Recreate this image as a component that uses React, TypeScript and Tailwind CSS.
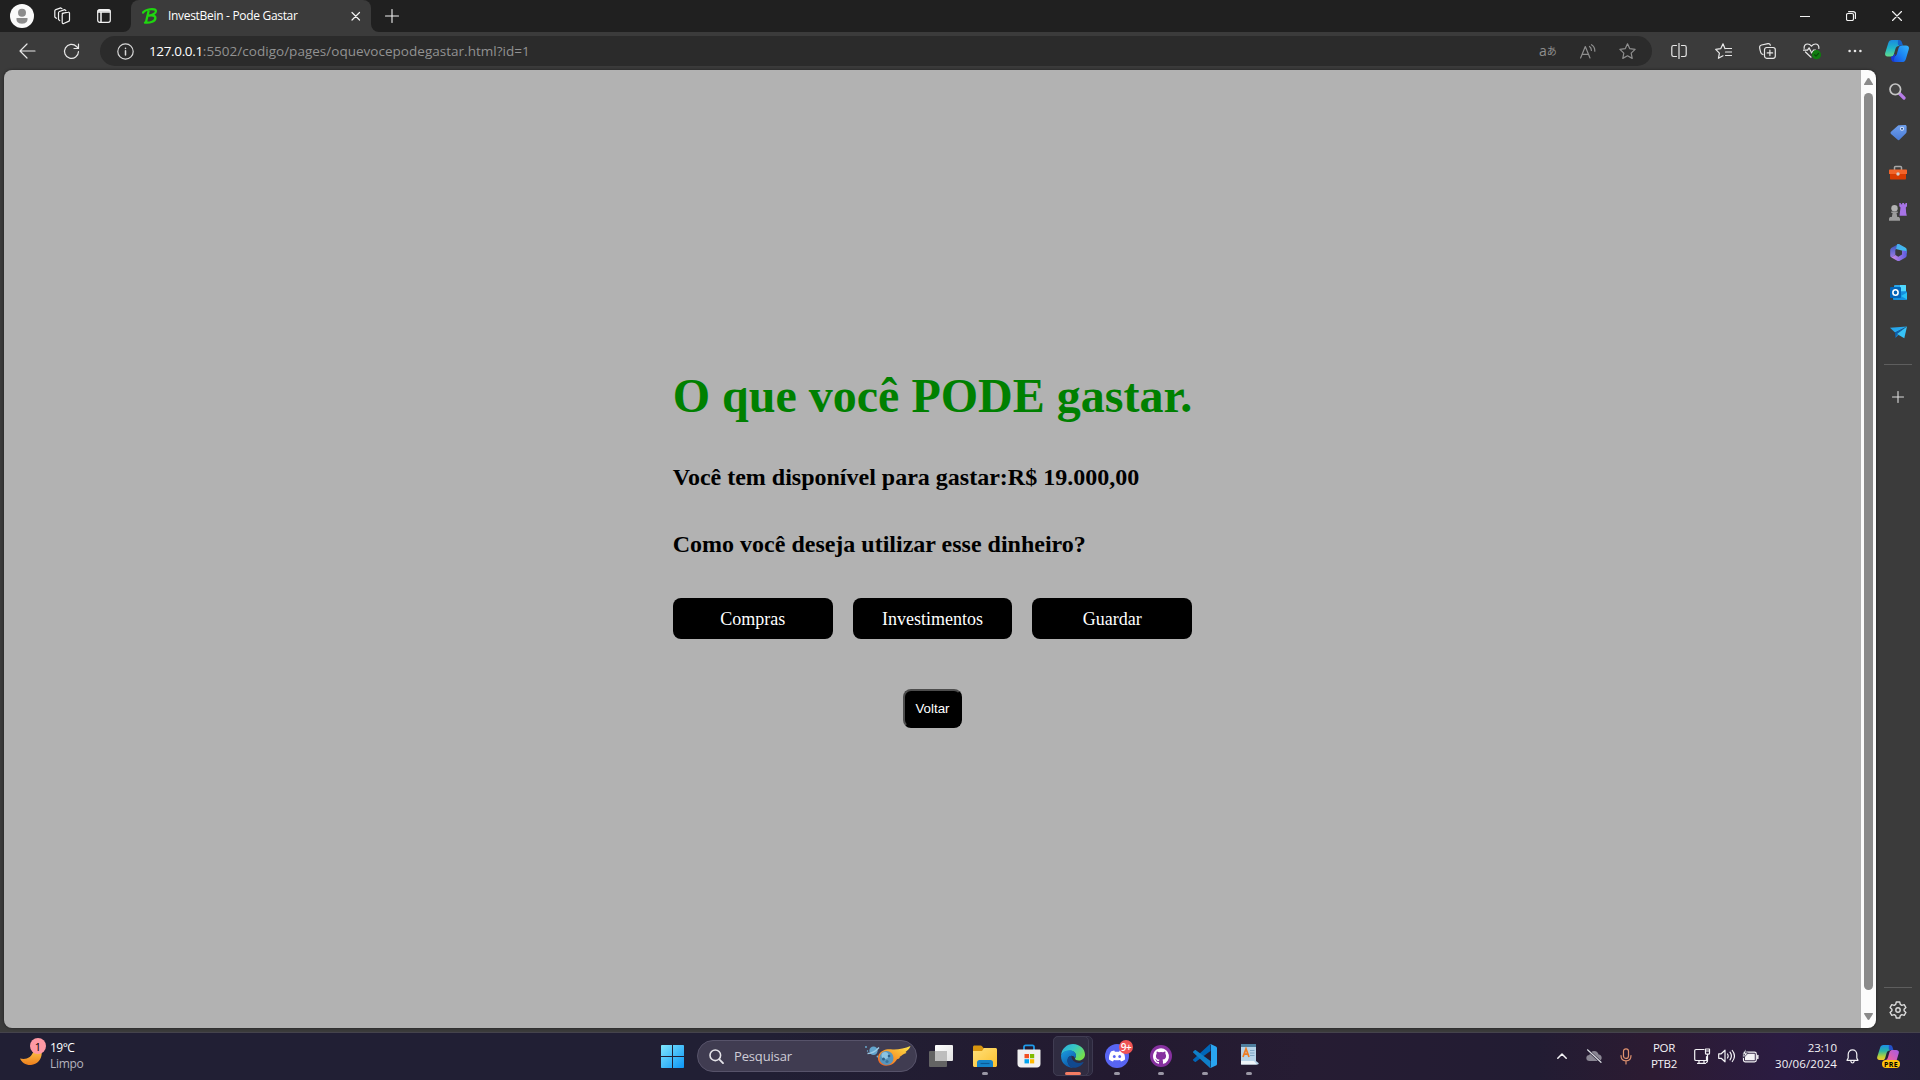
import React from "react";

type IconProps = { w: number; h: number; className?: string; children: React.ReactNode };

function Icon({ w, h, className = "", children }: IconProps) {
  return (
    <svg
      width={w}
      height={h}
      viewBox={`0 0 ${w} ${h}`}
      fill="none"
      stroke="currentColor"
      strokeWidth={1.2}
      strokeLinecap="round"
      strokeLinejoin="round"
      className={`block shrink-0 ${className}`}
    >
      {children}
    </svg>
  );
}

function TabBar() {
  return (
    <header className="flex h-8 items-center bg-[#202020] text-[#f2f2f2]">
      <Icon w={24} h={24} className="ml-2.5">
        <circle cx="12" cy="12" r="12" fill="#fafafa" stroke="none" />
        <circle cx="12" cy="8.700" r="4" fill="#8c8c8c" stroke="none" />
        <path d="M6.500 14h11v1.500c0 2.400-2.400 4.200-5.500 4.200s-5.500-1.800-5.500-4.200z" fill="#8c8c8c" stroke="none" />
      </Icon>
      <Icon w={18} h={18} className="ml-[19px]">
        <path d="M9.200 6.300 15.300 5.200a1 1 0 0 1 1.200.9v7a1.500 1.500 0 0 1-1 1.300l-4.800 2.100a1 1 0 0 1-1.500-.9V7.800a1.500 1.500 0 0 1 1-1.300z" />
        <path d="M6.800 13.600 5.500 12.500V5.800a1.500 1.500 0 0 1 1-1.300L11.700 2.600l1.100.9" />
        <path d="M3.300 11.300 1.800 10V3.900a1.500 1.500 0 0 1 1-1.300L7.800.9l1.200.8" />
      </Icon>
      <Icon w={14} h={14} className="ml-[26px]">
        <rect x=".7" y=".7" width="12.600" height="12.600" rx="2" />
        <path d="M1 3h12M4 3v10" strokeWidth="1.500" />
        <path d="M1.500 1.600h11" strokeWidth="1.800" />
      </Icon>
      <div className="relative ml-5 flex h-8 w-60 items-center rounded-t-lg bg-[#3b3b3b]">
        <svg className="absolute bottom-0 -left-2" width="8" height="8" viewBox="0 0 8 8">
          <path d="M8 0v8H0a8 8 0 0 0 8-8z" fill="#3b3b3b" />
        </svg>
        <svg className="absolute -right-2 bottom-0" width="8" height="8" viewBox="0 0 8 8">
          <path d="M0 0v8h8a8 8 0 0 1-8-8z" fill="#3b3b3b" />
        </svg>
        <Icon w={16} h={16} className="ml-[11px] text-[#1fd60f]">
          <path
            d="M1 4.500C3 2 8 .8 12 1.300c2.500.4 2.600 3-.2 4.700-1.600 1-3.500 1.500-5 1.600 3-.5 6.700-.3 6.600 2.500-.1 3.200-5 5-10.400 4.500M6.500 3.500 4 14"
            strokeWidth="2.300"
          />
        </Icon>
        <span className="ml-2.5 w-[171px] text-xs leading-4 tracking-[-0.31px] whitespace-nowrap text-white">
          InvestBein - Pode Gastar
        </span>
        <Icon w={10} h={10} className="ml-[11.5px]">
          <path d="m1 1.500 7.500 7.500M8.500 1.500 1 9" />
        </Icon>
      </div>
      <Icon w={14} h={14} className="ml-[14px]">
        <path d="M7 .5v13M.5 7h13" strokeWidth="1.100" />
      </Icon>
      <div className="mr-[18px] ml-auto flex items-center">
        <Icon w={10} h={10}>
          <path d="M0 5.500h10" />
        </Icon>
        <Icon w={10} h={10} className="ml-9">
          <rect x=".5" y="2.500" width="7" height="7" rx="1.500" />
          <path d="M2.600.6h4.600a2.300 2.300 0 0 1 2.300 2.300v4.500" />
        </Icon>
        <Icon w={10} h={10} className="ml-9">
          <path d="m.5.5 9 9M9.500.5l-9 9" />
        </Icon>
      </div>
    </header>
  );
}

function Copilot() {
  return (
    <svg width="24" height="22" viewBox="0 0 24 22" className="block">
      <defs>
        <linearGradient id="cpA" x1="0" y1="0" x2="0" y2="1">
          <stop offset="0" stopColor="#1a8be0" />
          <stop offset=".5" stopColor="#1fb5c9" />
          <stop offset="1" stopColor="#62dc8c" />
        </linearGradient>
        <linearGradient id="cpB" x1="0" y1="1" x2="1" y2="0">
          <stop offset="0" stopColor="#1746e0" />
          <stop offset=".5" stopColor="#1b86f2" />
          <stop offset="1" stopColor="#35b4fb" />
        </linearGradient>
      </defs>
      <path d="M13 0c1.500 0 2.500 1 2 2.500L14 6c-2 .3-3 1-3.600 3l-1.600 5.500C8.300 16 7.500 16.500 6 16.500H2.500C.5 16.500-.3 15 .2 13L3.300 3C3.900 1 5 0 7 0z" fill="url(#cpA)" />
      <path d="M13 0h1c1.600 0 2.400.8 2.800 2l1.200 3.500h-4c-.8-.3-1.300-1-1.200-2z" fill="#1763c9" />
      <path d="M17.500 5.500H21c2.300 0 3.400 1.500 2.800 3.700l-3 10C20.200 21.200 19 22 17 22h-7c-1.300 0-2.200-1.200-1.800-2.500L9 16.500c1.700-.3 2.500-1.200 3-3L13.600 8c.6-1.800 1.800-2.500 3.900-2.500z" fill="url(#cpB)" />
      <path d="M6 16.500c1.500 0 2.400-.6 3-2l1.500-.5-1.600 5.500c-.3 1-.1 1.900.6 2.500-1.700 0-2.700-.8-3.100-2.200z" fill="#1739d8" />
    </svg>
  );
}

function Toolbar() {
  return (
    <div className="flex h-[38px] items-center bg-[#3b3b3b] text-[#e8e8e8]">
      <Icon w={17} h={16} className="ml-[19px]">
        <path d="M16 8H1.200M8 1 1 8l7 7" />
      </Icon>
      <Icon w={17} h={17} className="ml-[27px]">
        <path d="M15.500 8.500a7 7 0 1 1-2-5l1.800 1.700M15.500 1v4.500H11" />
      </Icon>
      <div className="ml-5 flex h-[30px] w-[1552px] items-center rounded-full bg-[#2b2b2b]">
        <Icon w={17} h={17} className="ml-[17px] text-[#d8d8d8]">
          <circle cx="8.500" cy="8.500" r="7.700" />
          <path d="M8.500 7.800v4.200M8.500 5.200v.2" strokeWidth="1.500" />
        </Icon>
        <div className="ml-[15px] flex text-[13.5px] leading-5 whitespace-nowrap text-[#929292]">
          <span className="tracking-[-0.35px] text-white">127.0.0.1</span>
          <span className="tracking-[0.02px]">:5502/codigo/pages/oquevocepodegastar.html?id=1</span>
        </div>
        <div className="mr-[16px] ml-auto flex items-center text-[#8f8f8f]">
          <span className="flex w-[18px] items-center text-[#8f8f8f]">
            <span className="text-[14px] leading-4">a</span>
            <span className="text-[10px] leading-4">あ</span>
          </span>
          <Icon w={16} h={15} className="ml-[23px]">
            <path d="m.6 14 4.700-11.500L10 14M2.200 10.300h6.200M9.500 2.500c1.300.9 1.900 2.200 1.900 4M11.500.7c2.200 1.300 3.400 3.500 3.300 6.500" />
          </Icon>
          <Icon w={17} h={16} className="ml-[23px]">
            <path d="m8.500.8 2.300 4.900 5.300.7-3.900 3.700 1 5.300-4.700-2.600-4.700 2.600 1-5.300L.9 6.400l5.300-.7z" />
          </Icon>
        </div>
      </div>
      <Icon w={16} h={16} className="ml-[19px]">
        <path d="M8 0v16M5.500 2.500h-3a1.700 1.700 0 0 0-1.700 1.700v7.600a1.700 1.700 0 0 0 1.700 1.700h3M10.500 2.500h3a1.700 1.700 0 0 1 1.700 1.700v7.600a1.700 1.700 0 0 1-1.700 1.700h-3" />
      </Icon>
      <Icon w={17} h={16} className="ml-7">
        <path d="M10 5.700 8 .8 5.700 5.700l-5 .7 3.700 3.700-1 5.200L8 12.800M10.500 5.500h6M10.500 9h6M10.500 12.500h6" />
      </Icon>
      <Icon w={17} h={16} className="ml-[27px]">
        <rect x="5.500" y="4.500" width="10.800" height="10.800" rx="2.200" />
        <path d="M10.900 7.200v5.400M8.200 9.900h5.400M4 11.500 2.500 10.700C1.500 10 .5 5 .7 3.700.9 2.700 1.800 2.200 2.500 2L9 .7c1.200-.2 2 .3 2.400 1.500" />
      </Icon>
      <svg width="19" height="17" viewBox="0 0 19 17" className="ml-[27px] block shrink-0" fill="none" stroke="#e8e8e8" strokeWidth="1.200" strokeLinecap="round" strokeLinejoin="round">
        <path d="M1.200 5.500C.8 2.500 2.500 1 4.500 1c1.800 0 3 .9 4 2.200C9.500 1.900 10.700 1 12.500 1c2 0 3.700 1.500 3.300 4.500M2.500 9l5.500 5.200M.5 7.200h4l1.600-2.400L8.700 10l1.800-3h2" />
        <circle cx="13.500" cy="11.700" r="4.600" fill="#107c10" stroke="none" />
        <path d="m11.600 11.800 1.400 1.300 2.500-2.600" stroke="#0a4a0a" />
      </svg>
      <Icon w={14} h={4} className="ml-[26px]">
        <g fill="currentColor" stroke="none">
          <circle cx="1.600" cy="2" r="1.300" />
          <circle cx="7" cy="2" r="1.300" />
          <circle cx="12.400" cy="2" r="1.300" />
        </g>
      </Icon>
      <div className="ml-[23px]">
        <Copilot />
      </div>
    </div>
  );
}

function ChoiceButton({ label }: { label: string }) {
  return (
    <button className="h-[41px] flex-1 rounded-lg bg-black pt-px text-[18px] leading-[21px] text-white">{label}</button>
  );
}

function WebPage() {
  return (
    <main className="flex flex-1 flex-col items-center bg-[#b2b2b2] pt-[298px] font-['Liberation_Serif',serif] text-black">
      <div className="w-[519.5px]">
        <h1 className="text-[48px] leading-[55px] font-bold whitespace-nowrap text-[#008000]">O que você PODE gastar.</h1>
        <h2 className="mt-[41px] text-2xl leading-[27px] font-bold whitespace-nowrap">
          Você tem disponível para gastar:R$ 19.000,00
        </h2>
        <h2 className="mt-10 text-2xl leading-[27px] font-bold whitespace-nowrap">
          Como você deseja utilizar esse dinheiro?
        </h2>
        <div className="mt-10 flex gap-5">
          <ChoiceButton label="Compras" />
          <ChoiceButton label="Investimentos" />
          <ChoiceButton label="Guardar" />
        </div>
      </div>
      <button className="mt-[50px] h-[39px] w-[59px] rounded-lg border-2 border-t-[#4d4d4d] border-r-black border-b-black border-l-[#4d4d4d] bg-black font-['Liberation_Sans',sans-serif] text-[13.333px] leading-[15px] text-white">
        Voltar
      </button>
    </main>
  );
}

function Scrollbar() {
  return (
    <div className="flex w-[15px] flex-col items-center bg-[#fcfcfc]">
      <svg width="9" height="7" viewBox="0 0 9 7" className="mt-2 block">
        <path d="M4.500 0c.4 0 .7.200.9.500l3.500 5.600c.2.500 0 .9-.5.900H.6c-.5 0-.7-.4-.5-.9L3.600.5c.2-.3.5-.5.900-.5z" fill="#8b8b8b" />
      </svg>
      <div className="mt-2 h-[897px] w-[9px] rounded-full bg-[#8b8b8b]" />
      <svg width="9" height="7" viewBox="0 0 9 7" className="mt-[23px] block">
        <path d="M4.500 7c.4 0 .7-.2.900-.5L8.900.9C9.100.4 8.900 0 8.400 0H.6C.1 0-.1.400.1.900l3.500 5.600c.2.300.5.500.9.500z" fill="#8b8b8b" />
      </svg>
    </div>
  );
}

function Slot({ children }: { children: React.ReactNode }) {
  return <div className="flex h-10 w-full items-center justify-center">{children}</div>;
}

function EdgeSidebar() {
  return (
    <aside className="flex w-11 flex-col items-center pt-0.5 text-[#dcdcdc]">
      <Slot>
        <svg width="17" height="17" viewBox="0 0 17 17" fill="none" className="mr-px mb-0.5">
          <path d="m10.500 10.500 4.500 4.500" stroke="#b57be8" strokeWidth="3.200" strokeLinecap="round" />
          <circle cx="6.300" cy="6.300" r="5.300" stroke="#c4c4c4" strokeWidth="1.700" fill="#444" />
        </svg>
      </Slot>
      <Slot>
        <svg width="17" height="17" viewBox="0 0 17 17">
          <defs>
            <linearGradient id="tagG" x1="0" y1="0" x2="0" y2="1">
              <stop offset="0" stopColor="#6fa0ee" />
              <stop offset="1" stopColor="#4a7bd6" />
            </linearGradient>
          </defs>
          <path d="M9.500 1.200 15 1c1 0 1.600.6 1.600 1.500v5.300c0 .6-.2 1-.6 1.500l-6.300 6.300c-.7.700-1.600.7-2.300 0L1 9.900c-.6-.7-.6-1.500 0-2.200l6.800-6c.5-.4 1-.5 1.700-.5z" fill="url(#tagG)" />
          <circle cx="12" cy="4.700" r="2" fill="#dbe8fb" />
          <circle cx="12" cy="4.700" r="1" fill="#234a8c" />
        </svg>
      </Slot>
      <Slot>
        <svg width="18" height="15" viewBox="0 0 18 15">
          <path d="M5.500 5V2.500c0-.6.400-1 1-1h5c.6 0 1 .4 1 1V5" fill="none" stroke="#a8a8a8" strokeWidth="1.500" />
          <path d="M0 5.500c0-.6.400-1 1-1h16c.6 0 1 .4 1 1V9H0z" fill="#f2642a" />
          <path d="M1 9h16v4.500c0 .6-.4 1-1 1H2c-.6 0-1-.4-1-1z" fill="#d83b01" />
          <circle cx="9" cy="9" r="1.700" fill="#d0d0d0" />
        </svg>
      </Slot>
      <Slot>
        <svg width="18" height="18" viewBox="0 0 18 18">
          <path d="M10.300 0h1.500v1.300h1.400V0h1.900v1.300h1.300V0H18v3.200l-1.200 1.300.3 5 .7 3.200h-7.300l1-8.200-1.200-1.300z" fill="#a774e6" />
          <circle cx="5.500" cy="5.200" r="3.200" fill="#b2b2b2" />
          <path d="M2.300 8.500h6.400v1.500H7.500l.8 4H10c.6.500 1 1.200 1 2v1.800H0V16c0-.8.400-1.500 1-2h1.800l.8-4H2.300z" fill="#9b9b9b" />
        </svg>
      </Slot>
      <Slot>
        <svg width="17" height="17" viewBox="0 0 17 17">
          <defs>
            <linearGradient id="mA" x1="0" y1="0" x2="0" y2="1">
              <stop offset="0" stopColor="#3455b8" />
              <stop offset="1" stopColor="#9a7be6" />
            </linearGradient>
            <linearGradient id="mB" x1="0" y1="0" x2="1" y2="1">
              <stop offset="0" stopColor="#4aa8ec" />
              <stop offset="1" stopColor="#3bc5f2" />
            </linearGradient>
            <linearGradient id="mC" x1="0" y1="0" x2="1" y2="0">
              <stop offset="0" stopColor="#d08be8" />
              <stop offset="1" stopColor="#5a5ce0" />
            </linearGradient>
          </defs>
          <path d="M8.500 0 2 3.500C.9 4.200.2 5.100.2 6.300v5.200c0 1 .6 1.600 1.300 1.900L5.300 11V6.300z" fill="url(#mA)" />
          <path d="M7 .6C7.800 0 9 0 9.800.4l5.400 3c1 .6 1.500 1.500 1.500 2.600v3.500l-5-3L6 5z" fill="url(#mB)" />
          <path d="M16.700 7v4.200c0 1.200-.6 2-1.500 2.600l-5.400 2.900c-.9.500-1.700.4-2.600 0L1.500 13.400 5.300 11l3 1.700 3.700-2.200v-4z" fill="url(#mC)" />
        </svg>
      </Slot>
      <Slot>
        <svg width="17" height="17" viewBox="0 0 17 17">
          <rect x="4" y="1" width="12" height="9" rx="1" fill="#2aa7ea" />
          <path d="M10 1h5c.6 0 1 .4 1 1v5h-6z" fill="#50d9ff" />
          <path d="M3 8.500 17 7.500V15c0 .6-.4 1-1 1H4c-.6 0-1-.4-1-1z" fill="#1490df" />
          <path d="m17 8.500-6 3.500 6 3.500z" fill="#28c0f5" />
          <rect x="0" y="3" width="11" height="11" rx="1" fill="#0364b8" />
          <ellipse cx="5.500" cy="8.500" rx="2.600" ry="2.700" fill="none" stroke="#fff" strokeWidth="1.600" />
        </svg>
      </Slot>
      <Slot>
        <svg width="17" height="13" viewBox="0 0 17 13">
          <path d="M0 1.800 17 .5 5 6.500z" fill="#27a7ec" />
          <path d="M5 6.500 17 .5 7 8l-1.700 4z" fill="#0b5fae" />
          <path d="m7 8 10-7.500-2.700 11.800z" fill="#37c3f7" />
          <path d="M7 8 5.300 12l3.200-3z" fill="#1484d6" />
        </svg>
      </Slot>
      <div className="mt-3 h-px w-7 bg-[#5e5e5e]" />
      <Icon w={12} h={12} className="mt-[26px] mr-px">
        <path d="M6 .5v11M.5 6h11" strokeWidth="1.100" />
      </Icon>
      <div className="mt-auto h-px w-7 bg-[#5e5e5e]" />
      <Icon w={18} h={18} className="mt-[13px] mb-[13px]">
        <path d="M7.300 1h3.400l.6 2.400 1.500.9 2.400-.7 1.700 2.900-1.800 1.700v1.600l1.800 1.700-1.700 2.900-2.400-.7-1.500.9-.6 2.400H7.300l-.6-2.400-1.500-.9-2.400.7-1.700-2.900 1.800-1.700V8.200L1.100 6.500l1.700-2.900 2.400.7 1.500-.9z" strokeWidth="1.400" />
        <circle cx="9" cy="9" r="2.200" strokeWidth="1.400" />
      </Icon>
    </aside>
  );
}

function Comet() {
  return (
    <svg width="46" height="20" viewBox="0 0 46 20" className="block">
      <defs>
        <linearGradient id="cometG" x1="0" y1="1" x2="1" y2="0">
          <stop offset="0" stopColor="#ee5a24" />
          <stop offset=".5" stopColor="#f9a02c" />
          <stop offset="1" stopColor="#ffe94a" />
        </linearGradient>
      </defs>
      <circle cx="8.500" cy="4.800" r="4.200" fill="#62a3cc" />
      <path d="M2.500 7.500C6 7.500 11 5 14 1.500" stroke="#9ccbe6" strokeWidth="1.300" fill="none" />
      <g fill="#6db3da">
        <circle cx="1" cy="1" r=".9" />
        <circle cx="2.500" cy="5" r=".7" />
        <circle cx="12.500" cy="10.500" r=".9" />
      </g>
      <path d="M13.500 9C16 4 22 2.500 27.500 3.500 33 3.800 40 2.500 45.500 0c-1 3-3 4.500-5 6l1 1c-3 1-5 2.500-7 4 1 .7 0 1.500-2.500 2.300C30 17 26 19.800 21 19.800c-6 0-9.500-5.500-7.500-10.800z" fill="url(#cometG)" />
      <circle cx="21.500" cy="12" r="7" fill="#5795bd" />
      <circle cx="20" cy="9.500" r="3.500" fill="#8cc4e2" />
      <circle cx="18.500" cy="13" r="1.500" fill="#2f6289" />
      <circle cx="24" cy="10" r="1.300" fill="#2f6289" />
      <circle cx="22" cy="15.500" r="1.600" fill="#3b739b" />
    </svg>
  );
}

function Dot() {
  return <div className="absolute bottom-px left-1/2 h-[3px] w-1.5 -translate-x-1/2 rounded-full bg-[#9a97a5]" />;
}

function AppSlot({ children, running = true }: { children: React.ReactNode; running?: boolean }) {
  return (
    <div className="relative flex h-10 w-11 items-center justify-center">
      {children}
      {running && <Dot />}
    </div>
  );
}

function TaskbarApps() {
  return (
    <div className="flex items-center">
      <svg width="23" height="23" viewBox="0 0 23 23" className="mt-px block">
        <defs>
          <linearGradient id="winG" x1="0" y1="0" x2="1" y2="1">
            <stop offset="0" stopColor="#7fe6fd" />
            <stop offset="1" stopColor="#0c95f5" />
          </linearGradient>
        </defs>
        <path d="M1 0h10v11H0V1c0-.6.400-1 1-1zM12 0h10c.6 0 1 .4 1 1v10H12zM0 12h11v11H1c-.6 0-1-.4-1-1zM12 12h11v10c0 .6-.4 1-1 1H12z" fill="url(#winG)" />
      </svg>
      <div className="ml-[13px] flex h-8 w-[220px] items-center rounded-full border border-[#57536a] bg-[#403c51]">
        <Icon w={15} h={15} className="ml-[11px] text-[#e4e3e8]">
          <circle cx="6.300" cy="6.300" r="5.300" strokeWidth="1.600" />
          <path d="m10.300 10.300 3.700 3.900" strokeWidth="1.800" />
        </Icon>
        <span className="ml-[10px] text-[13px] leading-5 tracking-[-0.15px] text-[#cfcdd6]">Pesquisar</span>
        <div className="mr-[5px] ml-auto">
          <Comet />
        </div>
      </div>
      <svg width="24" height="22" viewBox="0 0 24 22" className="ml-3 block">
        <defs>
          <linearGradient id="tvG" x1="0" y1="0" x2="1" y2="1">
            <stop offset="0" stopColor="#ffffff" />
            <stop offset="1" stopColor="#e2e2e2" />
          </linearGradient>
        </defs>
        <rect x="0" y="6" width="18" height="16" rx="1" fill="#636363" />
        <rect x="6" y="0" width="18" height="16" rx="1" fill="url(#tvG)" />
        <path d="M6 6h12v10H7c-.6 0-1-.4-1-1z" fill="#bdbdbd" />
      </svg>
      <div className="ml-[10px] flex">
        <AppSlot>
          <svg width="24" height="23" viewBox="0 0 24 23">
            <defs>
              <linearGradient id="fxG" x1="0" y1="0" x2="1" y2="1">
                <stop offset="0" stopColor="#ffe07a" />
                <stop offset="1" stopColor="#fbc02d" />
              </linearGradient>
            </defs>
            <path d="M0 2c0-.8.600-1.500 1.500-1.500h6c.7 0 1.200.3 1.600.8L10.500 3H22v4H0z" fill="#d9960f" />
            <path d="M0 6h9l2-3h11.500c.9 0 1.500.7 1.500 1.500v16c0 .9-.7 1.500-1.500 1.500h-21C.7 22 0 21.400 0 20.500z" fill="url(#fxG)" />
            <path d="M4 22v-4.500C4 16 5 15 6.500 15h11c1.500 0 2.500 1 2.500 2.500V22z" fill="#1583c9" />
            <path d="M7.500 18.500h9" stroke="#0c5a96" strokeWidth="1.200" />
          </svg>
        </AppSlot>
        <AppSlot running={false}>
          <svg width="24" height="24" viewBox="0 0 24 24">
            <path d="M7 6V3c0-1 .6-1.600 1.600-1.600h6.800c1 0 1.600.6 1.600 1.600v3" fill="none" stroke="#1f9ae8" strokeWidth="1.800" />
            <path d="M.5 6.500c0-.6.400-1 1-1h21c.6 0 1 .4 1 1V20c0 2-1.500 3.500-3.500 3.500H4C2 23.500.5 22 .5 20z" fill="#f0f0f0" />
            <path d="M7.500 10H12v4.200H7.500z" fill="#f25022" />
            <path d="M13 10h4.200v4.200H13z" fill="#7fba00" />
            <path d="M7.500 15.200H12v4.200H7.500z" fill="#00a4ef" />
            <path d="M13 15.200h4.200v4.200H13z" fill="#ffb900" />
          </svg>
        </AppSlot>
        <div className="relative ml-0.5 h-10 w-[42px]">
          <div className="absolute inset-y-0 left-0 w-10 rounded-[5px] border border-[#3d3950] bg-[#2c283d]" />
          <div className="absolute inset-y-0 left-0 w-9 rounded-[5px] border border-[#403c52] bg-[#302c41]" />
          <svg width="24" height="24" viewBox="0 0 24 24" className="absolute top-2 left-2">
            <defs>
              <linearGradient id="edA" x1="0" y1="0" x2="1" y2=".6">
                <stop offset="0" stopColor="#2aa8dd" />
                <stop offset=".5" stopColor="#36c8c5" />
                <stop offset="1" stopColor="#74e04c" />
              </linearGradient>
              <linearGradient id="edB" x1="0" y1="0" x2=".6" y2="1">
                <stop offset="0" stopColor="#1b9de2" />
                <stop offset="1" stopColor="#0c56a6" />
              </linearGradient>
            </defs>
            <path d="M.1 11C.7 4.700 5.800 0 12 0c7 0 12 5.200 12 10.500 0 3.500-2.800 6-6 6-2.500 0-4-1-4-2 0-.7 1-1.200 1-3 0-2.600-2.500-4.800-6-4.800-4 0-7.200 1.500-8.900 4.300z" fill="url(#edA)" />
            <path d="M.1 11C1.500 8 5 6.200 8.500 6.200c3.700 0 6.500 2.300 6.500 5.300 0 1.500-.7 2-1 2.800-.5-1.700-2-2.500-3.500-2.500-2.500 0-4 2.200-4 4.700 0 4 3 7 7.500 7.400C5.500 24.500-.6 18.500.1 11z" fill="url(#edB)" />
            <path d="M10.500 11.800c-2.500 0-4 2.200-4 4.700 0 4 3.500 7.500 8 7.200 3.500-.5 6.300-2.500 8-5.200.2-.4-.1-.7-.5-.5-5 2.300-11.800.2-11.500-6.200z" fill="#11498f" />
          </svg>
          <div className="absolute bottom-px left-3 h-[3px] w-4 rounded-full bg-[#f47c63]" />
        </div>
        <AppSlot>
          <svg width="24" height="24" viewBox="0 0 24 24">
            <circle cx="12" cy="12" r="12" fill="#5865f2" />
            <path d="M9.300 6.500c-1.500.2-2.800.7-3.500 1.200C4.500 9.800 3.800 12.300 4 15.500c1.300 1 2.700 1.600 4 1.900l.9-1.500c2 .6 4.200.6 6.200 0l.9 1.500c1.400-.3 2.800-.9 4-1.900.2-3.200-.5-5.700-1.800-7.800-.7-.5-2-1-3.500-1.200l-.6 1.200h-4.200z" fill="#fff" />
            <ellipse cx="9.300" cy="12.500" rx="1.400" ry="1.600" fill="#5865f2" />
            <ellipse cx="14.700" cy="12.500" rx="1.400" ry="1.600" fill="#5865f2" />
          </svg>
          <div className="absolute top-[3.5px] left-[24px] flex h-3.5 w-3.5 items-center justify-center rounded-full bg-[#f05454] text-[10px] leading-none font-semibold tracking-[-0.5px] text-white">
            9+
          </div>
        </AppSlot>
        <AppSlot>
          <svg width="22" height="22" viewBox="0 0 22 22">
            <circle cx="11" cy="11" r="11" fill="#86319f" />
            <g transform="translate(3 3) scale(.667)">
              <path fill="#fff" d="M12 .3C5.400.3 0 5.700 0 12.300c0 5.300 3.400 9.800 8.200 11.400.6.100.8-.3.8-.6v-2.200c-3.300.7-4-1.400-4-1.400-.6-1.400-1.400-1.800-1.400-1.800-1-.7.100-.7.1-.7 1.200.1 1.900 1.200 1.900 1.200 1 1.800 2.800 1.300 3.500 1 .1-.8.4-1.300.8-1.600-2.700-.3-5.500-1.300-5.500-5.900 0-1.300.5-2.400 1.200-3.200-.1-.3-.5-1.500.1-3.200 0 0 1-.3 3.300 1.200a11.500 11.500 0 0 1 6 0c2.300-1.500 3.300-1.200 3.300-1.200.7 1.700.2 2.900.1 3.200.8.8 1.200 1.900 1.200 3.200 0 4.600-2.800 5.600-5.500 5.900.4.400.8 1.100.8 2.200v3.300c0 .3.200.7.8.6A12 12 0 0 0 12 .3z" />
            </g>
          </svg>
        </AppSlot>
        <AppSlot>
          <svg width="24" height="24" viewBox="0 0 24 24">
            <path d="m0 16.300 1.700 1.500c.4.3.9.3 1.200 0L17.500 7V.2c-.4 0-.7.1-1 .4L.1 15.400c-.2.300-.2.600-.1.900z" fill="#0066b8" />
            <path d="m0 7.700 1.700-1.500c.4-.3.900-.3 1.200 0L17.500 17v6.800c-.4 0-.7-.1-1-.4L.1 8.600C-.1 8.300-.1 8 0 7.700z" fill="#0f7fc8" />
            <path d="M17.500 23.800c-.6 0-1-.2-1.300-.5.900.8 1.800.3 1.800-.7V1.400c0-1.100-1-1.600-1.800-.8.400-.5 1.100-.7 1.900-.4L23 2.600c.6.300 1 .9 1 1.500v15.800c0 .7-.4 1.200-1 1.500l-4.900 2.300z" fill="#29a5f0" />
          </svg>
        </AppSlot>
        <AppSlot>
          <svg width="19" height="22" viewBox="0 0 19 22" className="mb-1">
            <path d="M1 1h15v17l2.500 2c.5.700 0 1.500-.8 1.500H2c-.8 0-1.300-.6-1-1.500z" fill="#b7d3e8" />
            <path d="M1 1h15v3H1z" fill="#4f7f9f" />
            <path d="M1 18h13l3 3.500H1z" fill="#eef4f9" />
            <path d="m3 14 3-8.200L9 14M4.200 11.200h3.600" stroke="#ee7b22" strokeWidth="1.700" fill="none" />
            <path d="M10 7.500h4.500M10 10h4.500M10 12.500h4.500" stroke="#7fa6c4" />
          </svg>
        </AppSlot>
      </div>
    </div>
  );
}

function TaskbarCopilot() {
  return (
    <div className="relative h-[22px] w-6">
      <svg width="22" height="20" viewBox="0 0 24 22" className="block">
        <defs>
          <linearGradient id="tcA" x1="0" y1="0" x2="0" y2="1">
            <stop offset="0" stopColor="#1d8fe8" />
            <stop offset=".4" stopColor="#28b5a5" />
            <stop offset=".75" stopColor="#b2cf3c" />
            <stop offset="1" stopColor="#f5c62c" />
          </linearGradient>
          <linearGradient id="tcB" x1="1" y1="0" x2="0" y2="1">
            <stop offset="0" stopColor="#a35be6" />
            <stop offset=".6" stopColor="#e45fa8" />
            <stop offset="1" stopColor="#f78a5a" />
          </linearGradient>
        </defs>
        <path d="M13 0c1.500 0 2.500 1 2 2.500L14 6c-2 .3-3 1-3.600 3l-1.600 5.500C8.300 16 7.500 16.500 6 16.500H2.500C.5 16.500-.3 15 .2 13L3.300 3C3.900 1 5 0 7 0z" fill="url(#tcA)" />
        <path d="M13 0h1c1.600 0 2.400.8 2.800 2l1.200 3.500h-4c-.8-.3-1.300-1-1.200-2z" fill="#2450c8" />
        <path d="M17.500 5.500H21c2.300 0 3.400 1.500 2.800 3.700l-3 10C20.200 21.200 19 22 17 22h-7c-1.300 0-2.200-1.200-1.800-2.500L9 16.500c1.700-.3 2.500-1.200 3-3L13.600 8c.6-1.800 1.800-2.500 3.900-2.500z" fill="url(#tcB)" />
      </svg>
      <div className="absolute top-[15px] left-[5px] flex h-[8px] w-[18px] items-center justify-center rounded-sm bg-[#ffc20e] text-[7px] leading-none font-bold tracking-[0.3px] text-black">
        PRE
      </div>
    </div>
  );
}

function Tray() {
  return (
    <div className="flex items-center leading-4 text-[#f4f3f6]">
      <Icon w={10} h={6}>
        <path d="m.8 5.200 4.200-4.200 4.200 4.200" strokeWidth="1.500" />
      </Icon>
      <Icon w={16} h={14} className="ml-[19px]">
        <path d="M3.500 12C1.500 12 .3 10.700.3 9s1.300-3 3-3C4 3.700 5.700 2 8.200 2c2.300 0 4 1.500 4.400 3.600 1.800 0 3.100 1.500 3.100 3.200S14.500 12 12.500 12z" fill="#8a8693" stroke="none" />
        <path d="m1.500.8 13.500 12.500" stroke="#211b32" strokeWidth="2.400" />
        <path d="m1.500.8 13.500 12.500" stroke="#dddce2" />
      </Icon>
      <Icon w={12} h={17} className="ml-[18px] text-[#e0926f]">
        <rect x="3.500" y=".8" width="5" height="9.600" rx="2.500" />
        <path d="M1 7.500c0 3.200 2 5.300 5 5.300s5-2.100 5-5.300M6 13v3" />
      </Icon>
      <div className="ml-[17px] flex w-[30px] flex-col items-center text-[11.5px] leading-4">
        <span className="tracking-[-0.3px]">POR</span>
        <span className="tracking-[-0.3px]">PTB2</span>
      </div>
      <Icon w={17} h={16} className="ml-[15px]">
        <path d="M10 1.500H2A1.300 1.300 0 0 0 .7 2.800v8.400A1.300 1.300 0 0 0 2 12.500h10.500V8.500M5 12.500V15M10 12.500V15M3.500 15.300h8" />
        <path d="M11.500 1h4v4.200a1 1 0 0 1-1 1h-2a1 1 0 0 1-1-1zM13.500 6.500v6a2 2 0 0 1-1 2" />
        <path d="M12 3h3" />
      </Icon>
      <Icon w={17} h={14} className="ml-[7px]">
        <path d="M.7 4.800h2.500L7 1.200v11.600L3.200 9.300H.7zM9.500 5c.8 1.200.8 2.800 0 4M12 3.200c1.700 2.300 1.700 5.300 0 7.600M14.300 1.500c2.600 3.300 2.600 7.700 0 11" />
      </Icon>
      <Icon w={17} h={14} className="ml-[7px]">
        <rect x="1.500" y="3.200" width="12.800" height="9.600" rx="1.800" />
        <rect x="3" y="4.700" width="9.800" height="6.600" fill="currentColor" stroke="none" />
        <path d="M15.800 6.500v3" strokeWidth="1.500" />
        <path d="M4 0 .2 5h2.200L1.400 9l4.800-5H4z" fill="currentColor" stroke="#211b38" strokeWidth=".7" />
      </Icon>
      <div className="ml-3.5 flex w-[64px] flex-col items-end text-[11.5px] leading-4">
        <span>23:10</span>
        <span className="tracking-[0.1px]">30/06/2024</span>
      </div>
      <Icon w={13} h={15} className="ml-[9px]">
        <path d="M1 11.300 2.200 9V5.300C2.200 2.700 4.100.8 6.500.8s4.300 1.900 4.300 4.500V9l1.200 2.300zM4.800 12c.2 1.300.8 2 1.700 2s1.500-.7 1.700-2" />
      </Icon>
      <div className="ml-[18px]">
        <TaskbarCopilot />
      </div>
    </div>
  );
}

function Taskbar() {
  return (
    <footer className="grid h-12 grid-cols-[661px_1fr_363px] items-center border-t border-[#45434c] bg-[linear-gradient(90deg,#211f34_0%,#211f34_40%,#231a30_58%,#261c33_68%,#221c33_80%,#2c1b32_86%,#2b1c42_93%,#231f38_100%)] pb-px">
      <div className="flex items-center">
        <div className="relative mb-2 ml-5 h-7 w-[27px]">
          <svg width="22" height="16" viewBox="0 0 22 16" className="absolute bottom-0 left-0">
            <defs>
              <linearGradient id="moonG" x1="0" y1="0" x2="0" y2="1">
                <stop offset="0" stopColor="#fbc44a" />
                <stop offset="1" stopColor="#ee7f1c" />
              </linearGradient>
            </defs>
            <path d="M0 8.500c6 1.500 11.500-.5 14-8.500h7.500c1.500 8-3.500 14.500-10.500 15C6 15.300 1.500 12.500 0 8.500z" fill="url(#moonG)" />
          </svg>
          <div className="absolute top-0 left-[10px] flex h-4 w-4 items-center justify-center rounded-full bg-[#ff99a4] text-[11px] leading-none text-black">
            1
          </div>
        </div>
        <div className="ml-[3px] flex flex-col text-xs leading-4">
          <span className="tracking-[-0.5px] text-white">19°C</span>
          <span className="tracking-[-0.3px] text-[#b5b3be]">Limpo</span>
        </div>
      </div>
      <TaskbarApps />
      <Tray />
    </footer>
  );
}

export default function App() {
  return (
    <div className="flex h-[1080px] w-[1920px] flex-col overflow-hidden bg-[#3b3b3b] font-['Open_Sans','Noto_Sans_CJK_JP',sans-serif]">
      <TabBar />
      <Toolbar />
      <div className="flex h-[962px]">
        <div className="ml-1 flex h-[958px] w-[1872px] overflow-hidden rounded-lg shadow-[0_0_3px_rgba(0,0,0,0.5)]">
          <WebPage />
          <Scrollbar />
        </div>
        <EdgeSidebar />
      </div>
      <Taskbar />
    </div>
  );
}
